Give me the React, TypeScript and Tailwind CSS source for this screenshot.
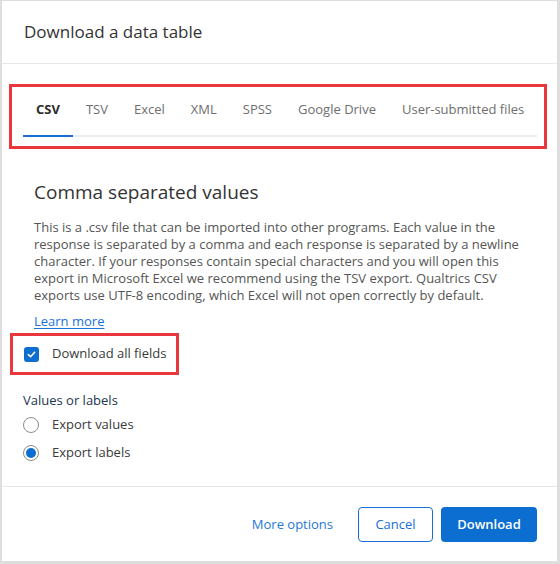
import React, { useState } from 'react';

const tabs = ['CSV', 'TSV', 'Excel', 'XML', 'SPSS', 'Google Drive', 'User-submitted files'];

const Radio = ({ checked, label, onSelect }: { checked: boolean; label: string; onSelect: () => void }) => (
  <label className="flex items-center h-[28px] cursor-pointer" onClick={onSelect}>
    <span className="flex items-center justify-center w-[16px] h-[16px] rounded-full border border-[#8c8c8c] bg-white">
      {checked && <span className="w-[10px] h-[10px] rounded-full bg-[#0b6ed0]" />}
    </span>
    <span className="ml-[13px] text-[13px] text-[#3a3a3a]">{label}</span>
  </label>
);

export default function App() {
  const [active, setActive] = useState(0);
  const [allFields, setAllFields] = useState(true);
  const [mode, setMode] = useState<'values' | 'labels'>('labels');

  return (
    <div className="w-[560px] h-[564px] bg-[#dedede] pl-[2px] pt-[1px] font-['Open_Sans',sans-serif]">
      <div className="w-[555px] h-[560px] bg-white flex flex-col">
        {/* header */}
        <div className="h-[63px] flex items-center pl-[22px] border-b border-[#e8e8e8]">
          <h1 className="text-[17px] text-[#333]">Download a data table</h1>
        </div>

        {/* tab strip (highlighted) */}
        <div className="mt-[20px] ml-[7px] mr-[10px] border-[3px] border-[#e8383d] pl-[11px] pr-[7px] pt-[12px] pb-[9px]">
          <div className="flex border-b-2 border-[#ececec]">
            {tabs.map((t, i) => (
              <button
                key={t}
                onClick={() => setActive(i)}
                className={`px-[13px] pb-[16px] -mb-[2px] border-b-2 text-[13px] leading-[20px] whitespace-nowrap ${
                  i === active
                    ? 'border-[#1a6ed8] text-[#2b2b2b] font-bold'
                    : 'border-transparent text-[#6e6e6e]'
                }`}
              >
                {t}
              </button>
            ))}
          </div>
        </div>

        {/* tab panel */}
        <div className="pl-[32px] pr-[20px] mt-[29px]">
          <h2 className="text-[19px] leading-[28px] text-[#333]">Comma separated values</h2>
          <p className="mt-[13px] text-[13px] leading-[17px] text-[#555] whitespace-nowrap">
            This is a .csv file that can be imported into other programs. Each value in the
            <br />
            response is separated by a comma and each response is separated by a newline
            <br />
            character. If your responses contain special characters and you will open this
            <br />
            export in Microsoft Excel we recommend using the TSV export. Qualtrics CSV
            <br />
            exports use UTF-8 encoding, which Excel will not open correctly by default.
          </p>
          <a href="#" className="block mt-[9px] w-fit text-[13px] leading-[17px] text-[#1a73d6] underline underline-offset-2">
            Learn more
          </a>
        </div>

        {/* download all fields (highlighted) */}
        <label
          className="mt-[3px] ml-[8px] w-[169px] h-[42px] border-[3px] border-[#e8383d] flex items-center pl-[11px] cursor-pointer"
          onClick={() => setAllFields(!allFields)}
        >
          <span
            className={`flex items-center justify-center w-[15px] h-[15px] rounded-[3px] ${
              allFields ? 'bg-[#0b6ed0]' : 'border border-[#8c8c8c] bg-white'
            }`}
          >
            {allFields && (
              <svg width="9" height="9" viewBox="0 0 10 10" fill="none">
                <path d="M1.5 5.2 4 7.5 8.5 2.5" stroke="white" strokeWidth="1.8" strokeLinecap="round" strokeLinejoin="round" />
              </svg>
            )}
          </span>
          <span className="ml-[13px] text-[13px] text-[#3a3a3a]">Download all fields</span>
        </label>

        {/* values or labels */}
        <div className="pl-[21px] mt-[15px]">
          <div className="text-[13px] leading-[20px] text-[#22364f]">Values or labels</div>
          <div className="mt-[1px]">
            <Radio checked={mode === 'values'} label="Export values" onSelect={() => setMode('values')} />
            <Radio checked={mode === 'labels'} label="Export labels" onSelect={() => setMode('labels')} />
          </div>
        </div>

        {/* footer */}
        <div className="mt-auto border-t border-[#e8e8e8] pt-[20px] pb-[19px] pr-[20px] flex items-center justify-end">
          <button className="text-[13px] text-[#1f78d6] mr-[25px]">More options</button>
          <button className="w-[75px] h-[35px] rounded-[4px] border border-[#1a6ed8] text-[13px] text-[#1a6ed8]">
            Cancel
          </button>
          <button className="ml-[8px] w-[96px] h-[35px] rounded-[4px] bg-[#0b6ed0] text-[13px] font-semibold text-white">
            Download
          </button>
        </div>
      </div>
    </div>
  );
}
